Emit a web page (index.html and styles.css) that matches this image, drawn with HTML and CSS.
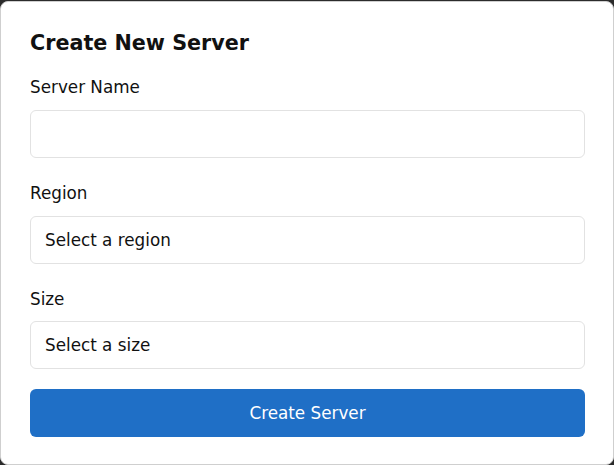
FILE: index.html
```html
<!DOCTYPE html>
<html lang="en">
<head>
<meta charset="utf-8">
<title>Create New Server</title>
<link rel="stylesheet" href="styles.css">
</head>
<body>
<div class="card">
  <h2 class="title">Create New Server</h2>
  <form class="form">
    <div class="field">
      <label class="label" for="name">Server Name</label>
      <input class="control" id="name" type="text">
    </div>
    <div class="field">
      <label class="label" for="region">Region</label>
      <select class="control" id="region"><option>Select a region</option></select>
    </div>
    <div class="field field--last">
      <label class="label" for="size">Size</label>
      <select class="control" id="size"><option>Select a size</option></select>
    </div>
    <button class="submit" type="button">Create Server</button>
  </form>
</div>
</body>
</html>
```

FILE: styles.css
```css
html, body {
  margin: 0;
  padding: 0;
  background: #2b2b2b;
  height: 100%;
  overflow: hidden;
}
body {
  font-family: "DejaVu Sans", sans-serif;
  color: #111;
}
.card {
  box-sizing: border-box;
  margin-top: 1px;
  width: 614px;
  height: 464px;
  background: #fff;
  border: 1px solid #cfcfcf;
  border-radius: 8px;
  padding: 29px 28px 29px 29px;
}
.title {
  margin: 0 0 23px;
  font-size: 20.7px;
  font-weight: bold;
  line-height: 24.4px;
  color: #111;
}
.form {
  display: flex;
  flex-direction: column;
}
.field {
  display: flex;
  flex-direction: column;
  margin-bottom: 26.7px;
}
.field--last {
  margin-bottom: 19.6px;
}
.label {
  font-size: 16.8px;
  line-height: 19.2px;
  margin-bottom: 12px;
  color: #111;
}
.control {
  box-sizing: border-box;
  height: 48px;
  width: 100%;
  margin: 0;
  padding: 0 14px;
  border: 1px solid #e2e2e2;
  border-radius: 6px;
  background: #fff;
  font-family: "DejaVu Sans", sans-serif;
  font-size: 16.8px;
  color: #111;
  -webkit-appearance: none;
  appearance: none;
  outline: none;
}
.submit {
  height: 48px;
  width: 100%;
  border: none;
  border-radius: 6px;
  background: #1f6fc6;
  color: #fff;
  font-family: "DejaVu Sans", sans-serif;
  font-size: 16.8px;
  cursor: pointer;
}
```
